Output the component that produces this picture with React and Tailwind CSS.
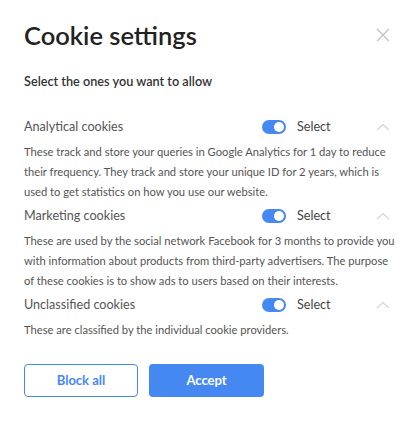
import React from "react";

function Toggle() {
  return (
    <div className="w-[24px] h-[14px] rounded-full bg-[#4688f1] flex items-center justify-end pr-[2px] shrink-0">
      <div className="w-[10px] h-[10px] rounded-full bg-white" />
    </div>
  );
}

function Chevron() {
  return (
    <svg width="14" height="8" viewBox="0 0 14 8" fill="none" className="shrink-0">
      <path d="M1 7L7 1.5L13 7" stroke="#d4d4d4" strokeWidth="1.2" />
    </svg>
  );
}

function Row({ label, desc, first }) {
  return (
    <div className={first ? "" : "mt-[2px]"}>
      <div className="h-[24px] flex items-center">
        <div className="w-[238px] text-[12.6px] text-[#555]">{label}</div>
        <Toggle />
        <div className="ml-[11px] w-[79px] text-[12.6px] text-[#444]">Select</div>
        <Chevron />
      </div>
      <p className="mt-[3px] text-[11.2px] leading-[20px] text-[#555]">{desc}</p>
    </div>
  );
}

export default function App() {
  return (
    <div className="w-[420px] h-[421px] bg-white px-6 pt-[17px]" style={{ fontFamily: "Lato, 'Noto Sans', sans-serif" }}>
      <div className="flex items-center justify-between h-[36px]">
        <h1 className="text-[25.5px] font-semibold text-[#222]">Cookie settings</h1>
        <svg width="14" height="14" viewBox="0 0 14 14" className="mr-[6px]">
          <path d="M1 1L13 13M13 1L1 13" stroke="#c4c4c4" strokeWidth="1.4" />
        </svg>
      </div>
      <div className="mt-[19px] text-[12.7px] font-semibold text-[#333]">Select the ones you want to allow</div>
      <div className="mt-[24px]">
        <Row
          first
          label="Analytical cookies"
          desc="These track and store your queries in Google Analytics for 1 day to reduce their frequency. They track and store your unique ID for 2 years, which is used to get statistics on how you use our website."
        />
        <Row
          label="Marketing cookies"
          desc="These are used by the social network Facebook for 3 months to provide you with information about products from third-party advertisers. The purpose of these cookies is to show ads to users based on their interests."
        />
        <Row label="Unclassified cookies" desc="These are classified by the individual cookie providers." />
      </div>
      <div className="mt-[24px] flex gap-[11px]">
        <button className="w-[114px] h-[33px] rounded-[4px] border border-[#4688f1] text-[#4688f1] text-[13px] font-bold bg-white">
          Block all
        </button>
        <button className="w-[115px] h-[33px] rounded-[4px] bg-[#4688f1] text-white text-[13px] font-bold">
          Accept
        </button>
      </div>
    </div>
  );
}
